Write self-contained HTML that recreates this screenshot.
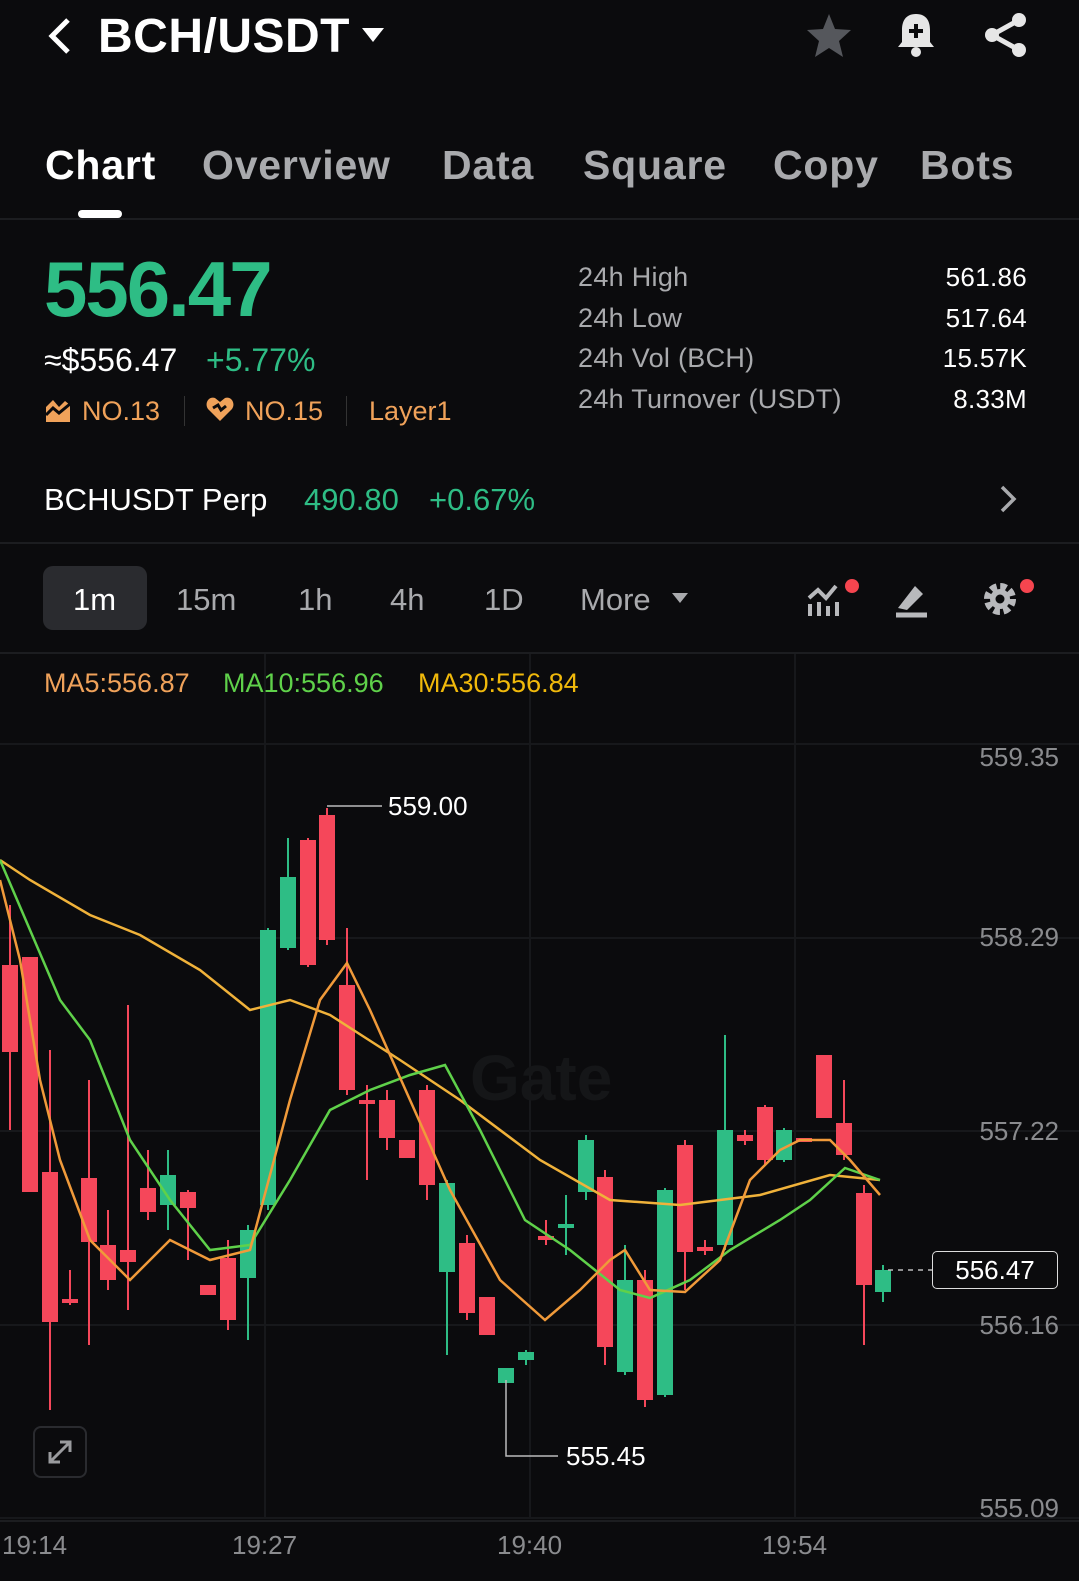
<!DOCTYPE html>
<html><head><meta charset="utf-8"><style>
*{margin:0;padding:0;box-sizing:border-box}
body{width:1079px;height:1581px;background:#0b0b0d;color:#fff;font-family:"Liberation Sans",sans-serif;position:relative;overflow:hidden}
.a{position:absolute;white-space:nowrap}
.tab{font-size:41px;font-weight:bold;color:#a9aaad;top:142px;letter-spacing:0.8px}
.g{color:#2ebd85}
.lbl{color:#a9aaad;font-size:27px;left:578px;letter-spacing:0.3px}
.val{font-size:26px;right:52px;text-align:right;letter-spacing:0.3px}
.tf{font-size:31px;color:#a9aaad;top:582px}
.ax{font-size:26px;color:#8a8b8e}
</style></head><body>
<svg class="a" style="left:44px;top:16px" width="30" height="40"><path d="M24 4 L8 20 L24 36" stroke="#fff" stroke-width="5" fill="none"/></svg>
<div class="a" style="left:98px;top:9px;font-size:48px;font-weight:bold;letter-spacing:0.5px">BCH/USDT</div>
<svg class="a" style="left:362px;top:28px" width="22" height="16"><path d="M0 0H22L11 14Z" fill="#fff"/></svg>
<svg class="a" style="left:805px;top:12px" width="48" height="46"><path d="M24 2 L30 17 L46 18 L34 29 L38 45 L24 36 L10 45 L14 29 L2 18 L18 17Z" fill="#55575c"/></svg>
<svg class="a" style="left:895px;top:12px" width="42" height="46"><path d="M21 2 C10 2 7 10 7 18 V30 L3 35 H39 L35 30 V18 C35 10 32 2 21 2Z" fill="#e6e6e6"/><circle cx="21" cy="40" r="5" fill="#e6e6e6"/><path d="M21 12V26M14 19H28" stroke="#0b0b0d" stroke-width="4"/></svg>
<svg class="a" style="left:983px;top:12px" width="46" height="46"><circle cx="36" cy="8" r="7" fill="#e6e6e6"/><circle cx="9" cy="23" r="7" fill="#e6e6e6"/><circle cx="36" cy="38" r="7" fill="#e6e6e6"/><path d="M36 8L9 23L36 38" stroke="#e6e6e6" stroke-width="5" fill="none"/></svg>
<div class="a tab" style="left:45px;color:#fff">Chart</div>
<div class="a tab" style="left:202px">Overview</div>
<div class="a tab" style="left:442px">Data</div>
<div class="a tab" style="left:583px">Square</div>
<div class="a tab" style="left:773px">Copy</div>
<div class="a tab" style="left:920px">Bots</div>
<div class="a" style="left:78px;top:210px;width:44px;height:8px;border-radius:4px;background:#fff"></div>
<div class="a" style="left:0;top:218px;width:1079px;height:2px;background:#1c1d20"></div>
<div class="a g" style="left:44px;top:244px;font-size:78px;font-weight:bold;letter-spacing:-2px">556.47</div>
<div class="a" style="left:44px;top:342px;font-size:32px">≈$556.47</div>
<div class="a g" style="left:206px;top:342px;font-size:32px">+5.77%</div>
<svg class="a" style="left:45px;top:397px" width="26" height="26"><path d="M1 25V10L8 3L14 10L20 4L25 8V25Z" fill="#f0a25a"/><path d="M1 18L8 11L14 16L25 7" stroke="#0b0b0d" stroke-width="3" fill="none"/></svg>
<div class="a" style="left:82px;top:396px;font-size:27px;color:#f0a25a">NO.13</div>
<div class="a" style="left:184px;top:396px;width:1px;height:30px;background:#333"></div>
<svg class="a" style="left:206px;top:396px" width="28" height="26"><path d="M14 25L2 13C-2 7 3 0 9 2L14 6L19 2C25 0 30 7 26 13Z" fill="#f0a25a"/><path d="M7 12L12 9L15 14L20 10" stroke="#0b0b0d" stroke-width="3" fill="none"/></svg>
<div class="a" style="left:245px;top:396px;font-size:27px;color:#f0a25a">NO.15</div>
<div class="a" style="left:346px;top:396px;width:1px;height:30px;background:#333"></div>
<div class="a" style="left:369px;top:396px;font-size:27px;color:#f0a25a">Layer1</div>
<div class="a lbl" style="top:262px">24h High</div><div class="a val" style="top:262px">561.86</div>
<div class="a lbl" style="top:303px">24h Low</div><div class="a val" style="top:303px">517.64</div>
<div class="a lbl" style="top:343px">24h Vol (BCH)</div><div class="a val" style="top:343px">15.57K</div>
<div class="a lbl" style="top:384px">24h Turnover (USDT)</div><div class="a val" style="top:384px">8.33M</div>
<div class="a" style="left:44px;top:482px;font-size:31px">BCHUSDT Perp</div>
<div class="a g" style="left:304px;top:482px;font-size:31px">490.80</div>
<div class="a g" style="left:429px;top:482px;font-size:31px">+0.67%</div>
<svg class="a" style="left:998px;top:484px" width="20" height="30"><path d="M4 3L16 15L4 27" stroke="#a9aaad" stroke-width="3.5" fill="none"/></svg>
<div class="a" style="left:0;top:542px;width:1079px;height:2px;background:#1c1d20"></div>
<div class="a" style="left:43px;top:566px;width:104px;height:64px;border-radius:10px;background:#2a2b2f"></div>
<div class="a tf" style="left:73px;color:#fff">1m</div>
<div class="a tf" style="left:176px">15m</div>
<div class="a tf" style="left:298px">1h</div>
<div class="a tf" style="left:390px">4h</div>
<div class="a tf" style="left:484px">1D</div>
<div class="a tf" style="left:580px">More</div>
<svg class="a" style="left:672px;top:593px" width="16" height="12"><path d="M0 0H16L8 10Z" fill="#a9aaad"/></svg>
<svg class="a" style="left:806px;top:578px" width="56" height="40"><path d="M4 38V26M13 38V24M22 38V28M31 38V24" stroke="#b8b9bc" stroke-width="4"/><path d="M3 20L12 12L20 20L30 8" stroke="#b8b9bc" stroke-width="4" fill="none"/><circle cx="46" cy="8" r="7" fill="#f5454f"/></svg>
<svg class="a" style="left:893px;top:580px" width="40" height="38"><path d="M3 35H34" stroke="#b8b9bc" stroke-width="5"/><path d="M5 28L22 6L30 14L14 30Z" fill="#b8b9bc"/></svg>
<svg class="a" style="left:980px;top:576px" width="58" height="44"><circle cx="20" cy="23" r="12" fill="none" stroke="#b8b9bc" stroke-width="8" stroke-dasharray="6 3.4"/><circle cx="20" cy="23" r="10" fill="#b8b9bc"/><circle cx="20" cy="23" r="4.5" fill="#0b0b0d"/><circle cx="47" cy="10" r="7" fill="#f5454f"/></svg>
<div class="a" style="left:0;top:652px;width:1079px;height:2px;background:#1c1d20"></div>
<svg class="a" style="left:0;top:654px" width="1079" height="927">
<g stroke="#17181b" stroke-width="2">
<path d="M265 0V865M530 0V865M795 0V865"/>
<path d="M0 90H1079M0 284H1079M0 477H1079M0 671H1079M0 864H1079"/>
</g>
<text x="470" y="446" font-size="64" font-weight="bold" fill="#151618" font-family="Liberation Sans">Gate</text>
</svg>
<div class="a" style="left:44px;top:668px;font-size:27px;color:#f0a25a">MA5:556.87</div>
<div class="a" style="left:223px;top:668px;font-size:27px;color:#5fd14a">MA10:556.96</div>
<div class="a" style="left:418px;top:668px;font-size:27px;color:#f0b90b">MA30:556.84</div>
<svg class="a" style="left:0;top:0" width="1079" height="1581" id="ch">
<g id="cd"></g>
<polyline fill="none" stroke="#f0b23a" stroke-width="2.5" points="0,860 30,880 90,915 140,935 200,970 250,1010 290,1000 330,1015 400,1060 460,1100 540,1160 610,1200 680,1205 760,1195 830,1175 880,1180"/>
<polyline fill="none" stroke="#5fd14a" stroke-width="2.5" points="0,860 30,930 60,1000 90,1040 130,1140 170,1200 210,1250 250,1245 290,1180 330,1110 370,1090 410,1075 445,1065 480,1130 525,1220 570,1250 620,1290 650,1298 690,1280 730,1250 780,1220 810,1200 845,1168 880,1180"/>
<polyline fill="none" stroke="#f09a3a" stroke-width="2.5" points="0,880 20,960 40,1080 60,1160 90,1240 130,1280 170,1240 210,1260 250,1250 290,1100 320,1000 347,963 370,1010 410,1100 450,1190 500,1280 545,1320 580,1290 610,1260 625,1250 650,1290 685,1292 720,1260 750,1180 780,1150 800,1140 830,1140 850,1160 880,1195"/>
<path d="M327 806H382M506 1380V1456H558" stroke="#bbb" stroke-width="1.5" fill="none"/>
<path d="M888 1270H932" stroke="#bbb" stroke-width="1.5" stroke-dasharray="5 5"/>
</svg>
<script>
var C=[[10,965,1052,905,1130,0],[30,957,1192,957,1192,0],[50,1172,1322,1050,1410,0],[70,1299,1303,1270,1305,0],[89,1178,1242,1080,1345,0],[108,1245,1280,1210,1290,0],[128,1250,1262,1005,1310,0],[148,1188,1212,1150,1220,0],[168,1175,1205,1150,1230,1],[188,1192,1208,1190,1260,0],[208,1285,1295,1285,1295,0],[228,1258,1320,1240,1330,0],[248,1230,1278,1225,1340,1],[268,930,1205,928,1210,1],[288,877,948,838,950,1],[308,840,965,838,967,0],[327,815,940,808,945,0],[347,985,1090,928,1095,0],[367,1100,1104,1085,1180,0],[387,1100,1138,1090,1150,0],[407,1140,1158,1140,1158,0],[427,1090,1185,1085,1200,0],[447,1183,1272,1180,1355,1],[467,1243,1313,1235,1320,0],[487,1297,1335,1297,1335,0],[506,1368,1383,1368,1383,1],[526,1352,1360,1350,1365,1],[546,1236,1240,1220,1245,0],[566,1224,1228,1195,1255,1],[586,1140,1192,1135,1200,1],[605,1177,1347,1170,1365,0],[625,1280,1372,1245,1375,1],[645,1280,1400,1270,1407,0],[665,1190,1395,1188,1397,1],[685,1145,1252,1140,1290,0],[705,1247,1251,1240,1255,0],[725,1130,1245,1035,1250,1],[745,1135,1141,1130,1145,0],[765,1107,1160,1105,1165,0],[784,1130,1160,1128,1162,1],[804,1138,1142,1138,1142,0],[824,1055,1118,1055,1118,0],[844,1123,1155,1080,1160,0],[864,1193,1285,1185,1345,0],[883,1270,1292,1265,1302,1]];
var s='';C.forEach(function(c){var col=c[5]?'#2ebd85':'#f5475a';s+='<line x1="'+c[0]+'" x2="'+c[0]+'" y1="'+c[3]+'" y2="'+c[4]+'" stroke="'+col+'" stroke-width="2"/><rect x="'+(c[0]-8)+'" y="'+c[1]+'" width="16" height="'+Math.max(3,c[2]-c[1])+'" fill="'+col+'"/>';});
document.getElementById('cd').innerHTML=s;
</script>
<div class="a" style="left:388px;top:791px;font-size:26px">559.00</div>
<div class="a" style="left:566px;top:1441px;font-size:26px">555.45</div>
<div class="a ax" style="right:20px;top:742px">559.35</div>
<div class="a ax" style="right:20px;top:922px">558.29</div>
<div class="a ax" style="right:20px;top:1116px">557.22</div>
<div class="a ax" style="right:20px;top:1310px">556.16</div>
<div class="a ax" style="right:20px;top:1493px">555.09</div>
<div class="a" style="left:932px;top:1251px;width:126px;height:38px;border:1.5px solid #ddd;border-radius:5px;background:#0b0b0d;font-size:26px;text-align:center;line-height:36px">556.47</div>
<div class="a" style="left:33px;top:1426px;width:54px;height:52px;border:2px solid #2a2b2f;border-radius:8px"></div>
<svg class="a" style="left:46px;top:1438px" width="28" height="28"><path d="M4 24L24 4M14 4H24V14M4 14V24H14" stroke="#9a9b9e" stroke-width="3" fill="none"/></svg>
<div class="a" style="left:0;top:1520px;width:1079px;height:2px;background:#1c1d20"></div>
<div class="a ax" style="left:2px;top:1530px">19:14</div>
<div class="a ax" style="left:232px;top:1530px">19:27</div>
<div class="a ax" style="left:497px;top:1530px">19:40</div>
<div class="a ax" style="left:762px;top:1530px">19:54</div>
</body></html>
